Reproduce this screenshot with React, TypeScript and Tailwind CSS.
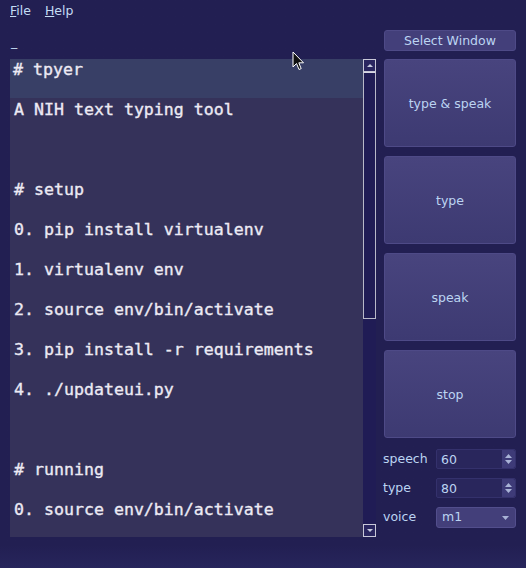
import React from "react";

const lines = [
  "# tpyer",
  "A NIH text typing tool",
  "",
  "# setup",
  "0. pip install virtualenv",
  "1. virtualenv env",
  "2. source env/bin/activate",
  "3. pip install -r requirements",
  "4. ./updateui.py",
  "",
  "# running",
  "0. source env/bin/activate",
];

const ui = { fontFamily: '"DejaVu Sans", "Liberation Sans", sans-serif' };
const mono = { fontFamily: '"DejaVu Sans Mono", "Liberation Mono", monospace' };

function BigButton({ label }: { label: string }) {
  return (
    <div className="h-[88px] pt-[2px] rounded-[3px] border border-[#4e4a87] bg-gradient-to-b from-[#48447e] to-[#3d3a72] flex items-center justify-center text-[12.5px] text-[#bcd4f2]">
      {label}
    </div>
  );
}

function Spin({ value }: { value: string }) {
  return (
    <div className="w-[80px] h-[20px] flex rounded-[2px] border border-[#34316c] bg-[#29265c]">
      <div className="flex-1 pl-[4px] text-[12.5px] leading-[19px] text-[#bcd4f2]">{value}</div>
      <div className="w-[13px] bg-[#3e3b78] rounded-r-[2px] flex flex-col items-center justify-center gap-[2px]">
        <svg width="7" height="4" viewBox="0 0 7 4"><path d="M0 4 L3.5 0 L7 4Z" fill="#a9b3d6" /></svg>
        <svg width="7" height="4" viewBox="0 0 7 4"><path d="M0 0 L3.5 4 L7 0Z" fill="#a9b3d6" /></svg>
      </div>
    </div>
  );
}

export default function App() {
  return (
    <div className="relative w-[526px] h-[568px] bg-gradient-to-b from-[#221f52] from-[96%] to-[#27255c] overflow-hidden" style={ui}>
      {/* menu */}
      <div className="h-[22px] flex items-center pl-[10px] gap-[14px] text-[12.5px] text-[#c4dcf4]">
        <span><span className="underline">F</span>ile</span>
        <span><span className="underline">H</span>elp</span>
      </div>
      <div className="flex pl-[10px] pt-[8px]">
        {/* left column */}
        <div className="w-[366px] flex flex-col">
          <div className="h-[29px] text-[12.5px] text-[#c4dcf4] pl-[1px] pt-[3px]">_</div>
          <div className="h-[478px] flex">
            <div className="flex-1 bg-[#35325a] overflow-hidden text-[16.6px] text-[#eceaf4]" style={mono}>
              {lines.map((l, i) => (
                <div
                  key={i}
                  className={
                    i === 0
                      ? "h-[39px] mb-[1px] bg-[#383f66] pl-[3px] pt-[1px] leading-[20px] whitespace-pre"
                      : "h-[40px] pl-[4px] pt-[1px] leading-[20px] whitespace-pre"
                  }
                  style={{ WebkitTextStroke: "0.35px #eceaf4" }}
                >
                  {l}
                </div>
              ))}
            </div>
            <div className="w-[13px] bg-[#201c55] flex flex-col">
              <div className="h-[13px] border border-[#c8c8d8] bg-[#2a2660] flex items-center justify-center">
                <svg width="6" height="3" viewBox="0 0 6 3"><path d="M0 3 L3 0 L6 3Z" fill="#c8cce0" /></svg>
              </div>
              <div className="h-[247px] border border-[#b8b8c8] border-t-[#d8d8e4]" />
              <div className="flex-1" />
              <div className="h-[13px] border border-[#c8c8d8] bg-[#2a2660] flex items-center justify-center">
                <svg width="6" height="3" viewBox="0 0 6 3"><path d="M0 0 L3 3 L6 0Z" fill="#c8cce0" /></svg>
              </div>
            </div>
          </div>
        </div>
        {/* right column */}
        <div className="ml-[8px] w-[132px] flex flex-col">
          <div className="h-[21px] pt-[1px] rounded-[3px] border border-[#4e4a87] bg-[#433f7a] flex items-center justify-center text-[12.5px] text-[#bcd4f2]">
            Select Window
          </div>
          <div className="mt-[8px] flex flex-col gap-[9px]">
            <BigButton label="type & speak" />
            <BigButton label="type" />
            <BigButton label="speak" />
            <BigButton label="stop" />
          </div>
          <div className="mt-[11px] flex flex-col gap-[9px] text-[12.5px] text-[#bcd4f2]">
            <div className="flex items-center justify-between">
              <span className="-ml-[1px]">speech</span>
              <Spin value="60" />
            </div>
            <div className="flex items-center justify-between">
              <span className="-ml-[1px]">type</span>
              <Spin value="80" />
            </div>
            <div className="flex items-center justify-between">
              <span className="-ml-[1px]">voice</span>
              <div className="w-[80px] h-[21px] rounded-[3px] border border-[#524e8c] bg-[#433f7a] flex items-center justify-between pl-[5px] pr-[6px]">
                <span className="text-[12.5px] text-[#bcd4f2]">m1</span>
                <svg width="7" height="4" viewBox="0 0 7 4"><path d="M0 0 L3.5 4 L7 0Z" fill="#a9b3d6" /></svg>
              </div>
            </div>
          </div>
        </div>
      </div>
      {/* mouse pointer */}
      <svg className="absolute left-[292px] top-[51px]" width="14" height="20" viewBox="0 0 14 20">
        <path d="M1 1 L1 16 L4.5 12.5 L7 18.5 L9.2 17.6 L6.8 11.8 L11.5 11.8 Z" fill="#111" stroke="#fff" strokeWidth="1" strokeLinejoin="round" />
      </svg>
    </div>
  );
}
